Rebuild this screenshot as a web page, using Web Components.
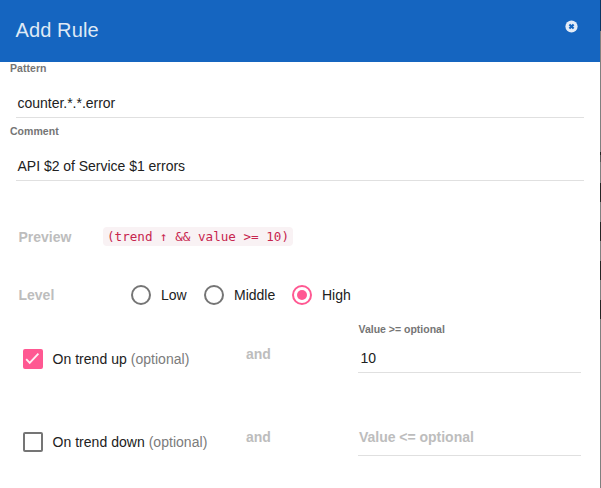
<!DOCTYPE html>
<html lang="en">
<head>
<meta charset="utf-8">
<title>Add Rule</title>
<style>
html, body { margin: 0; height: 488px; overflow: hidden; background: #fff; }
body { font-family: "Liberation Sans", Arial, sans-serif; font-size: 14px; color: #212121; }
</style>
</head>
<body>
<rule-dialog></rule-dialog>
<script>
function define(name, html) {
  const template = document.createElement('template');
  template.innerHTML = html;
  customElements.define(name, class extends HTMLElement {
    constructor() {
      super();
      this.attachShadow({ mode: 'open' }).append(template.content.cloneNode(true));
    }
  });
}

define('dialog-header', `
<style>
:host { display: flex; align-items: center; justify-content: space-between; height: 62px; box-sizing: border-box; padding: 0 22px 0 15.5px; background: #1565c0; color: #dfe9f5; }
h1 { margin: 0; font-size: 20px; font-weight: 400; line-height: 24px; letter-spacing: .12px; padding-bottom: 3px; }
svg { width: 13px; height: 13px; margin-bottom: 10px; display: block; }
</style>
<h1><slot></slot></h1>
<svg viewBox="0 0 13 13"><circle cx="6.5" cy="6.5" r="6.1" fill="#e3ecf7"/><path d="M4.4 4.4l4.2 4.2M8.6 4.4L4.4 8.6" stroke="#1565c0" stroke-width="2.1"/></svg>`);

define('text-field', `
<style>
:host { display: flex; flex-direction: column; height: 56px; box-sizing: border-box; }
.label { font-size: 10.5px; line-height: 12px; height: 14px; font-weight: 700; color: #757575; padding-left: 10px; letter-spacing: .04px; white-space: nowrap; }
.box { flex: 1; display: flex; align-items: center; margin: 0 16px; padding: 13px 1.5px 0; border-bottom: 1px solid #e0e0e0; letter-spacing: -.02px; white-space: nowrap; }
:host([compact]) .label { line-height: 14px; padding: 5px 0 0 .5px; letter-spacing: 0; }
:host([compact]) .box { margin: 0; padding: 8px 2.5px 0; }
:host([empty]) .label { padding: 0; }
:host([empty]) .box { font-weight: 700; color: #bdbdbd; padding: 5px 1px 0; }
</style>
<div class="label"><slot name="label"></slot></div>
<div class="box"><slot></slot></div>`);

define('muted-label', `
<style>:host { display: block; font-weight: 700; color: #bdbdbd; line-height: 20px; white-space: nowrap; }</style>
<slot></slot>`);

define('rule-preview', `
<style>
:host { display: block; background: #f9f2f4; color: #c7254e; border-radius: 4px; height: 19px; line-height: 19px; padding: 0 4px; margin-bottom: 2px; font-family: "DejaVu Sans Mono", monospace; font-size: 12.6px; white-space: nowrap; }
</style><slot></slot>`);

define('radio-option', `
<style>
:host { display: flex; align-items: center; gap: 10px; white-space: nowrap; }
i { width: 20px; height: 20px; box-sizing: border-box; border: 2px solid #757575; border-radius: 50%; display: grid; place-items: center; }
:host([checked]) i { border-color: #ff5892; }
:host([checked]) i::after { content: ""; width: 10px; height: 10px; border-radius: 50%; background: #ff5892; }
</style><i></i><span><slot></slot></span>`);

define('check-option', `
<style>
:host { display: flex; align-items: center; gap: 9.5px; letter-spacing: .03px; white-space: nowrap; }
i { width: 20px; height: 20px; box-sizing: border-box; border: 2px solid #757575; border-radius: 2px; display: block; }
svg { display: none; width: 16px; height: 16px; }
:host([checked]) i { border-color: #ff5892; background: #ff5892; }
:host([checked]) svg { display: block; }
.note { color: #7b7b7b; }
</style><i><svg viewBox="0 0 16 16"><path d="M1.2 8.2l3.5 3.6L13.4 2.7" fill="none" stroke="#fff" stroke-opacity=".9" stroke-width="1.9"/></svg></i><span><slot></slot> <span class="note"><slot name="note"></slot></span></span>`);

define('form-row', `
<style>
:host { display: flex; align-items: center; height: 40px; }
</style><slot></slot>`);

define('trend-row', `
<style>
:host { display: grid; grid-template-columns: 223px 112px 223px; height: 83px; padding-left: 23px; align-items: start; }
::slotted(check-option) { height: 20px; margin-top: 32px; }
::slotted(muted-label) { margin-top: 27px; }
</style><slot></slot>`);

/* Sliver of the dimmed page visible beside the dialog. */
define('page-edge', `
<style>
:host { display: block; width: 1px; height: 488px; background: linear-gradient(#0b3563 0 31px, #808080 31px 152px, #252525 152px 155px, #555 155px 162px, #808080 162px 183px, #252525 183px 202px, #808080 202px 222px, #252525 222px 241px, #808080 241px 261px, #252525 261px 280px, #808080 280px 300px, #252525 300px 319px, #808080 319px); }
</style>`);

define('rule-dialog', `
<style>
:host { display: grid; grid-template-columns: 600px 1px; height: 488px; }
.second { margin-top: 7px; }
.preview { margin-top: 36px; padding-left: 18.5px; }
.preview muted-label { width: 84.5px; }
.level { margin: 18px 0 2px; padding-left: 18.5px; }
.level muted-label { width: 112.5px; }
.low { width: 73px; } .middle { width: 88px; }
</style>
<main>
<dialog-header>Add Rule</dialog-header>
<text-field><span slot="label">Pattern</span><span>counter.*.*.error</span></text-field>
<text-field class="second"><span slot="label">Comment</span><span>API $2 of Service $1 errors</span></text-field>
<form-row class="preview"><muted-label>Preview</muted-label><rule-preview>(trend ↑ &amp;&amp; value &gt;= 10)</rule-preview></form-row>
<form-row class="level"><muted-label>Level</muted-label><radio-option class="low">Low</radio-option><radio-option class="middle">Middle</radio-option><radio-option checked>High</radio-option></form-row>
<trend-row><check-option checked>On trend up<span slot="note">(optional)</span></check-option><muted-label>and</muted-label><text-field compact><span slot="label">Value &gt;= optional</span><span>10</span></text-field></trend-row>
<trend-row><check-option>On trend down<span slot="note">(optional)</span></check-option><muted-label>and</muted-label><text-field compact empty><span>Value &lt;= optional</span></text-field></trend-row>
</main>
<page-edge></page-edge>`);
</script>
</body>
</html>
